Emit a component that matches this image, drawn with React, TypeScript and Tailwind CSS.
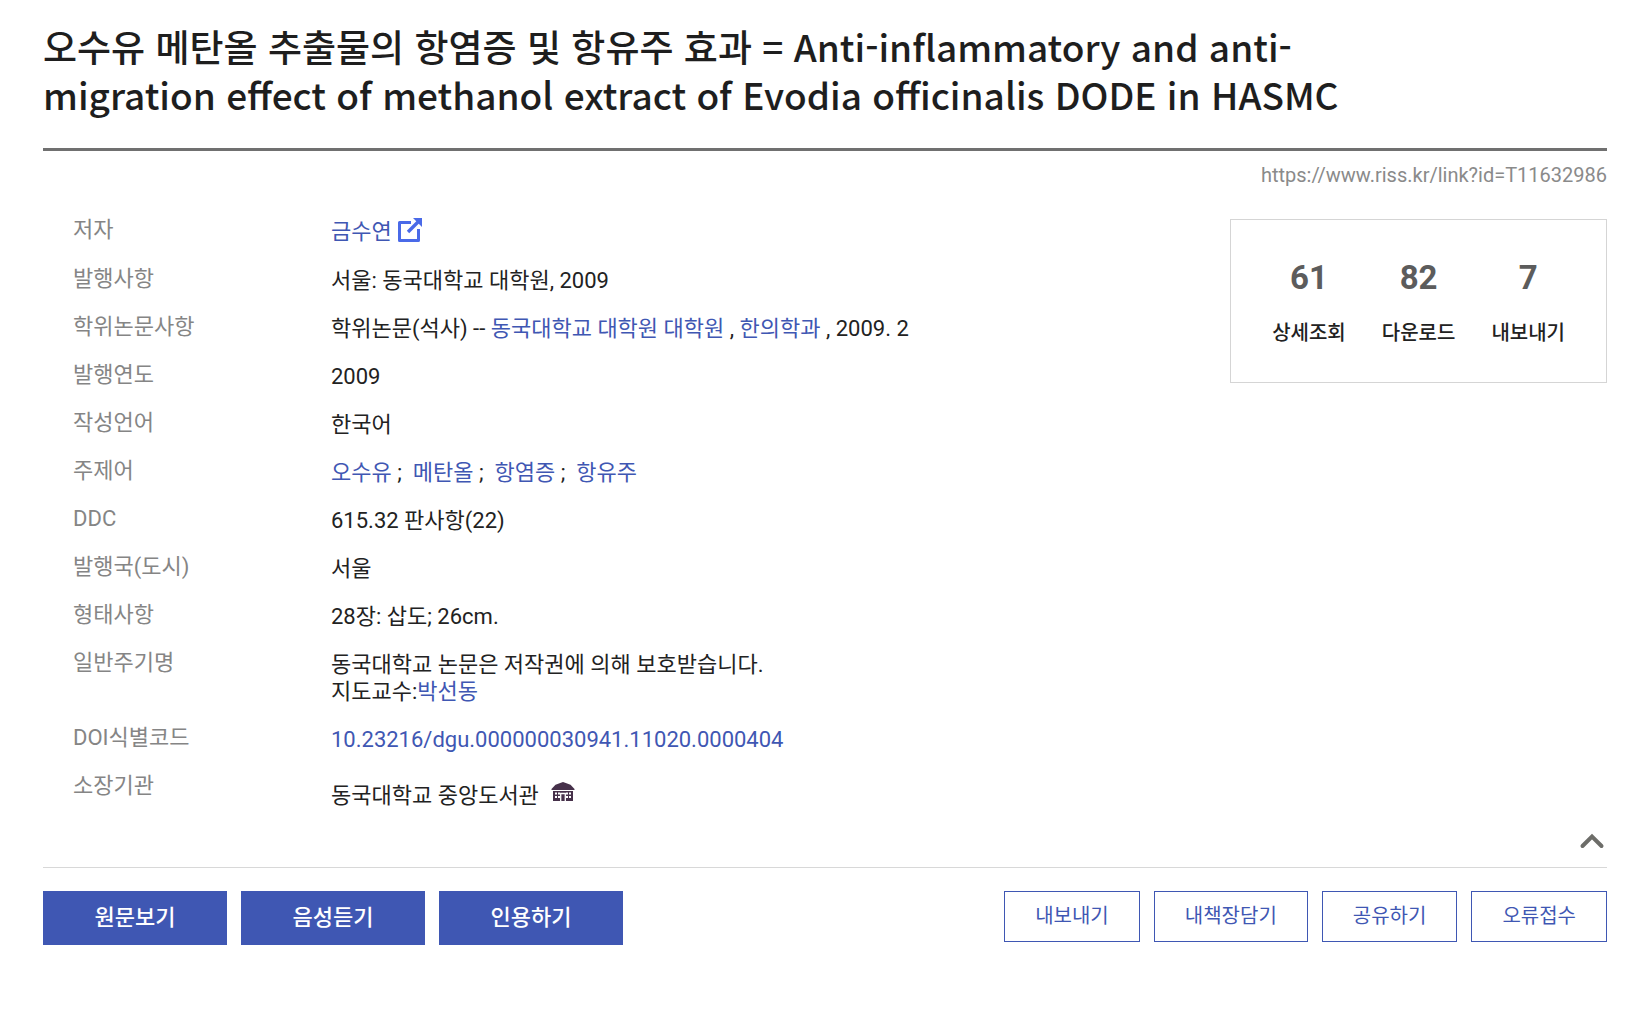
import * as React from "react";

const rows: { label: string; value: React.ReactNode }[] = [
    {
        label: "저자",
        value: (
            <span className="flex items-start gap-1.5 pb-px">
                <Link>금수연</Link>
                <a href="#author" aria-label="금수연">
                    <ExternalIcon/>
                </a>
            </span>
        ),
    },
    {label: "발행사항", value: "서울: 동국대학교 대학원, 2009"},
    {
        label: "학위논문사항",
        value: (
            <>
                학위논문(석사) -- <Link>동국대학교 대학원 대학원</Link> , <Link>한의학과</Link> , 2009. 2
            </>
        ),
    },
    {label: "발행연도", value: "2009"},
    {label: "작성언어", value: "한국어"},
    {
        label: "주제어",
        value: (
            <>
                <Link>오수유</Link> ;&nbsp; <Link>메탄올</Link> ;&nbsp; <Link>항염증</Link> ;&nbsp; <Link>항유주</Link>
            </>
        ),
    },
    {label: "DDC", value: "615.32 판사항(22)"},
    {label: "발행국(도시)", value: "서울"},
    {label: "형태사항", value: "28장: 삽도; 26cm."},
    {
        label: "일반주기명",
        value: (
            <>
                동국대학교 논문은 저작권에 의해 보호받습니다.
                <br/>
                지도교수:<Link>박선동</Link>
            </>
        ),
    },
    {label: "DOI식별코드", value: <Link>10.23216/dgu.000000030941.11020.0000404</Link>},
    {
        label: "소장기관",
        value: (
            <span className="flex items-start gap-3 pt-2">
                동국대학교 중앙도서관
                <LibraryIcon/>
            </span>
        ),
    },
];

const stats = [
    {count: 61, label: "상세조회"},
    {count: 82, label: "다운로드"},
    {count: 7, label: "내보내기"},
];

const mainActions = ["원문보기", "음성듣기", "인용하기"];
const subActions = ["내보내기", "내책장담기", "공유하기", "오류접수"];

function Link({children}: { children: React.ReactNode }) {
    return (
        <a href="#search" className="text-[#3f57b3]">
            {children}
        </a>
    );
}

function ExternalIcon() {
    return (
        <svg width="24" height="24" viewBox="0 0 24 24" fill="none" stroke="#4a6ae8" className="block">
            <path d="M13 4.5H1.5V22.5H20.5V11" strokeWidth="3" strokeLinejoin="round"/>
            <path d="M10 14L20.5 3.5" strokeWidth="3.4"/>
            <path d="M15 0H24V9Z" fill="#4a6ae8" stroke="none"/>
        </svg>
    );
}

function LibraryIcon() {
    return (
        <svg width="24" height="20" viewBox="0 0 24 20" className="block">
            <path d="M12 0L4.5 2.8L0.5 7V8H23.5V7L19.5 2.8Z" fill="#46304a"/>
            <path d="M2 9H22V19H2Z" fill="#46304a"/>
            <path d="M4 10.5h2v2H4zM7 10.5h2v2H7zM4 14h2v2H4zM7 14h2v2H7zM15 10.5h2v2h-2zM18 10.5h2v2h-2zM15 14h2v2h-2zM18 14h2v2h-2z" fill="#fff"/>
            <path d="M9.7 19V11.5H14.3V19" fill="#46304a" stroke="#fff" strokeWidth="1.3"/>
        </svg>
    );
}

export default function App() {
    return (
        <main
            className="bg-white pt-[22px] pr-9 pb-16 pl-[43px] text-[#222] font-[Roboto,'Noto_Sans_CJK_KR',sans-serif]"
            lang="ko"
        >
            <h1 className="border-b-3 border-[#707070] pr-56 pb-[30px] text-[37px] leading-[48px] font-medium text-[#1e1e1e] font-['Noto_Sans_CJK_KR',sans-serif]">
                오수유 메탄올 추출물의 항염증 및 항유주 효과 = Anti-inflammatory and anti-migration effect of methanol
                extract of Evodia officinalis DODE in HASMC
            </h1>

            <div className="flex justify-end pt-2.5">
                <a href="#link" className="text-[20px] leading-7 text-[#8a8a8a]">
                    https://www.riss.kr/link?id=T11632986
                </a>
            </div>

            <div className="flex items-start justify-between pt-[27px]">
                <dl className="min-w-0 flex-1 pl-[30px] text-[22px] leading-[27px]">
                    {rows.map((row) => (
                        <div key={row.label} className="flex pb-[21px]">
                            <dt className="w-[258px] shrink-0 text-[#858585]">{row.label}</dt>
                            <dd className="pt-0.5 -mb-0.5">{row.value}</dd>
                        </div>
                    ))}
                </dl>

                <ul className="mt-[3px] flex shrink-0 gap-9 border border-[#d5d5d5] px-[41px] pt-[38px] pb-[33px]">
                    {stats.map((stat) => (
                        <li key={stat.label} className="text-center">
                            <strong className="block text-[33px] leading-10 font-bold text-[#5c5c5c]">{stat.count}</strong>
                            <span className="block pt-[19px] text-[20px] leading-8 font-medium">{stat.label}</span>
                        </li>
                    ))}
                </ul>
            </div>

            <div className="flex justify-end border-b border-[#d8d8d8] pt-[5px] pr-0.5 pb-[18px]">
                <button type="button" aria-label="접기">
                    <svg width="26" height="16" viewBox="0 0 26 16" fill="none" className="block">
                        <path d="M3.5 13L13 3.5L22.5 13" stroke="#6d6d69" strokeWidth="4" strokeLinecap="round"/>
                    </svg>
                </button>
            </div>

            <div className="flex items-start justify-between pt-[23px] font-['Noto_Sans_CJK_KR',sans-serif]">
                <div className="flex gap-3.5">
                    {mainActions.map((name) => (
                        <button
                            key={name}
                            type="button"
                            className="h-[54px] w-[184px] bg-[#3f57b3] pb-1.5 text-[22px] font-medium text-white"
                        >
                            {name}
                        </button>
                    ))}
                </div>
                <div className="flex gap-3.5">
                    {subActions.map((name) => (
                        <button
                            key={name}
                            type="button"
                            className="h-[51px] border border-[#3f57b3] px-[30px] pb-1 text-[20px] text-[#3f57b3]"
                        >
                            {name}
                        </button>
                    ))}
                </div>
            </div>
        </main>
    );
}
